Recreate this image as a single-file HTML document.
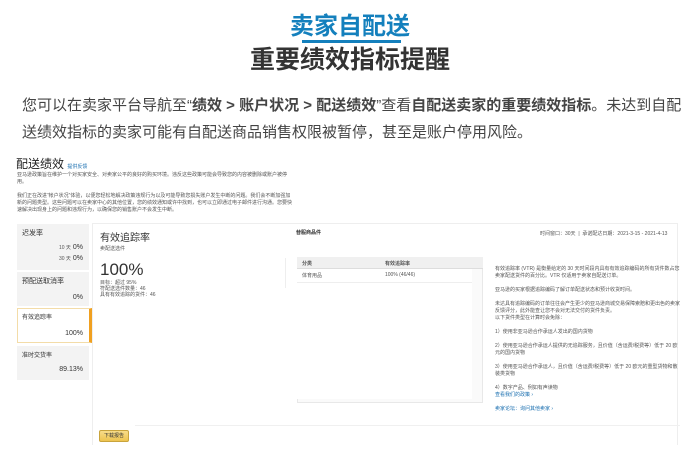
<!DOCTYPE html>
<html><head><meta charset="utf-8"><style>
*{margin:0;padding:0;box-sizing:border-box}
body{width:700px;height:450px;background:#fff;font-family:"Liberation Sans","Noto Sans CJK SC",sans-serif;position:relative;overflow:hidden;color:#333}
.a{position:absolute;white-space:nowrap}
.s{font-size:5px;color:#555}
</style></head><body>
<div class="a" style="left:0;width:700px;top:12px;text-align:center;font-size:24px;font-weight:bold;color:#1480bd;line-height:30px">卖家自配送</div>
<div class="a" style="left:302px;top:40px;width:99px;height:3px;background:#1480bd"></div>
<div class="a" style="left:0;width:700px;top:44px;text-align:center;font-size:25px;font-weight:bold;color:#333;line-height:32px">重要绩效指标提醒</div>
<div class="a" style="left:22px;top:92px;font-size:15px;line-height:27px;color:#444;width:670px;white-space:normal">您可以在卖家平台导航至“<b>绩效 &gt; 账户状况 &gt; 配送绩效</b>”查看<b>自配送卖家的重要绩效指标</b>。未达到自配送绩效指标的卖家可能有自配送商品销售权限被暂停，甚至是账户停用风险。</div>

<div class="a" style="left:16px;top:155px;font-size:12px;color:#222">配送绩效 <span style="font-size:5px;color:#1a6fb0">提供反馈</span></div>
<div class="a s" style="left:17px;top:172px;line-height:7px;white-space:normal;width:275px">亚马逊政策旨在维护一个对买家安全、对卖家公平的良好的购买环境。违反这些政策可能会导致您的内容被删除或账户被停用。<br><br>我们正在改进“帐户状况”体验，以便您轻松地解决政策违规行为以及可能导致您损失账户发生中断的问题。我们会不断加强加新的问题类型。这些问题可以在卖家中心的其他位置，您的绩效通知或许中找到，也可以立即通过电子邮件进行沟通。您要快速解决出现身上的问题和违规行为，以确保您的销售账户不会发生中断。</div>

<div class="a" style="left:17px;top:224px;width:72px;height:46px;background:#f3f3f3"></div>
<div class="a" style="left:22px;top:228px;font-size:7px">迟发率</div>
<div class="a" style="right:617px;top:244px;font-size:7px"><span class="s">10 天</span> 0%</div>
<div class="a" style="right:617px;top:255px;font-size:7px"><span class="s">30 天</span> 0%</div>
<div class="a" style="left:17px;top:272px;width:72px;height:34px;background:#f3f3f3"></div>
<div class="a" style="left:22px;top:276px;font-size:7px">预配送取消率</div>
<div class="a" style="right:617px;top:294px;font-size:7px">0%</div>
<div class="a" style="left:17px;top:308px;width:75px;height:35px;background:#fff;border:1px solid #f3dca8;border-right:3px solid #f0a020"></div>
<div class="a" style="left:22px;top:312px;font-size:6px">有效追踪率</div>
<div class="a" style="right:617px;top:330px;font-size:7px">100%</div>
<div class="a" style="left:17px;top:346px;width:72px;height:34px;background:#f3f3f3"></div>
<div class="a" style="left:22px;top:350px;font-size:6px">准时交货率</div>
<div class="a" style="right:617px;top:366px;font-size:7px">89.13%</div>

<div class="a" style="left:92px;top:223px;width:586px;height:222px;border:1px solid #eee;border-bottom:none"></div>
<div class="a" style="left:100px;top:229px;font-size:10px">有效追踪率</div>
<div class="a s" style="left:100px;top:245px">卖配送选件</div>
<div class="a" style="left:100px;top:260px;font-size:17px">100%</div>
<div class="a s" style="left:100px;top:280px;line-height:6px">目标：超过 95%<br>符配送选件数量：46<br>具有有效追踪的货件：46</div>
<div class="a" style="left:285px;top:258px;width:1px;height:30px;background:#eee"></div>
<div class="a" style="left:296px;top:229px;font-size:5px;font-weight:bold">替服商品件</div>
<div class="a" style="left:540px;top:230px;font-size:5px;color:#555">时间窗口：30天 &nbsp;| &nbsp;承诺配达日期：2021-3-15 - 2021-4-13</div>
<div class="a" style="left:297px;top:257px;width:186px;height:146px;border:1px solid #e8e8e8;background:#fafafa"></div>
<div class="a" style="left:297px;top:257px;width:186px;height:12px;background:#f0f0f0;border-bottom:1px solid #ddd"></div>
<div class="a" style="left:297px;top:269px;width:175px;height:130px;background:#fff"></div>
<div class="a s" style="left:302px;top:260px;font-weight:bold">分类</div>
<div class="a s" style="left:385px;top:260px;font-weight:bold">有效追踪率</div>
<div class="a s" style="left:302px;top:272px">体育用品</div>
<div class="a s" style="left:385px;top:272px">100% (46/46)</div>
<div class="a" style="left:297px;top:282px;width:175px;height:1px;background:#eee"></div>
<div class="a s" style="left:495px;top:266px;line-height:7px;white-space:normal;width:185px">有效追踪率 (VTR) 是衡量给定的 30 天时间段内具有有效追踪编码的所有货件数占您卖家配送货件的百分比。VTR 仅适用于卖家自配送订单。<br><br>亚马逊的买家根据追踪编码了解订单配送状态和预计收货时间。<br><br>未达具有追踪编码的订单往往会产生更少的亚马逊商城交易保障索赔和更出色的卖家反馈评分，此外能查让您不会对无法交付的货件负责。<br>以下货件类型在计算时会免除：<br><br>1）使用非亚马逊合作承运人发出的国内货物<br><br>2）使用亚马逊合作承运人提供的无追踪服务，且价值（含运费/税费等）低于 20 欧元的国内货物<br><br>3）使用亚马逊合作承运人，且价值（含运费/税费等）低于 20 欧元的重型货物和散装类货物<br><br>4）数字产品、例如有声读物<br><span style="color:#1a6fb0">查看我们的政策 ›</span><br><br><span style="color:#1a6fb0">卖家论坛：询问其他卖家 ›</span></div>
<div class="a" style="left:135px;top:425px;width:545px;height:1px;background:#f0f0f0"></div>
<div class="a" style="left:99px;top:430px;width:30px;height:12px;background:linear-gradient(#f7dc8a,#eec450);border:1px solid #c9a43c;border-radius:2px;font-size:5px;text-align:center;line-height:10px">下载报告</div>
</body></html>
